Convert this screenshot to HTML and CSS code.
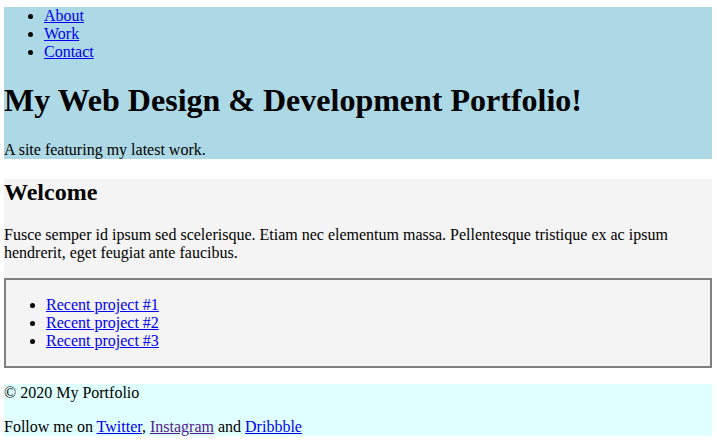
FILE: index.html
```html
<!DOCTYPE html>
<html>
<head>
<meta charset="utf-8">
<title>My Portfolio</title>
<link rel="stylesheet" href="styles.css">
</head>
<body>
<header class="site-header">
  <nav>
    <ul class="nav-list">
      <li><a href="#">About</a></li>
      <li><a href="#">Work</a></li>
      <li><a href="#">Contact</a></li>
    </ul>
  </nav>
  <h1 class="title">My Web Design &amp; Development Portfolio!</h1>
  <p class="tagline">A site featuring my latest work.</p>
</header>
<main class="content">
  <h2 class="heading">Welcome</h2>
  <p class="intro">Fusce semper id ipsum sed scelerisque. Etiam nec elementum massa. Pellentesque tristique ex ac ipsum hendrerit, eget feugiat ante faucibus.</p>
  <div class="projects">
    <ul class="project-list">
      <li><a href="#">Recent project #1</a></li>
      <li><a href="#">Recent project #2</a></li>
      <li><a href="#">Recent project #3</a></li>
    </ul>
  </div>
</main>
<footer class="site-footer">
  <p class="copy">&copy; 2020 My Portfolio</p>
  <p class="social">Follow me on <a href="#">Twitter</a>, <a class="visited" href="#">Instagram</a> and <a href="#">Dribbble</a></p>
</footer>
</body>
</html>
```
FILE: styles.css
```css
html {
  font-family: "Liberation Serif", "Times New Roman", serif;
  font-size: 16px;
}
body {
  margin: 7px 5px 8px 4px;
  line-height: normal;
  color: #000;
}
a {
  color: #0000ee;
}
a.visited {
  color: #551a8b;
}
.site-header {
  background: #add8e6;
}
.nav-list {
  margin: 0 0 16px 0;
  padding-left: 40px;
}
.title {
  font-size: 32px;
  margin: 21.44px 0;
}
.tagline {
  margin: 16px 0;
}
.content {
  background: #f4f4f4;
}
.heading {
  font-size: 24px;
  margin: 19.92px 0;
}
.intro {
  margin: 16px 0;
}
.projects {
  border: 2px solid #808080;
}
.project-list {
  margin: 16px 0;
  padding-left: 40px;
}
.site-footer {
  background: #e0ffff;
}
.site-footer p {
  margin: 16px 0;
}
```
